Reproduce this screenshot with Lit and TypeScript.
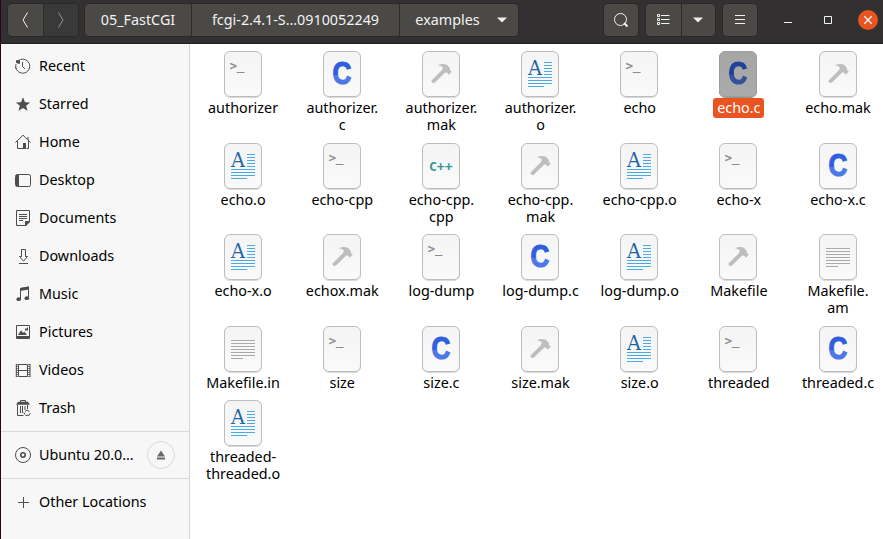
import { LitElement, html, svg, css, nothing } from "lit";
import { customElement, property } from "lit/decorators.js";
import { classMap } from "lit/directives/class-map.js";

type Kind = "exec" | "c" | "cpp" | "make" | "object" | "text";
interface Entry { kind: Kind; lines: string[]; selected?: boolean; }

const f = (kind: Kind, ...lines: string[]): Entry => ({ kind, lines });

const FILES: Entry[] = [
  f("exec", "authorizer"), f("c", "authorizer.", "c"), f("make", "authorizer.", "mak"), f("object", "authorizer.", "o"),
  f("exec", "echo"), { kind: "c", lines: ["echo.c"], selected: true }, f("make", "echo.mak"),
  f("object", "echo.o"), f("exec", "echo-cpp"), f("cpp", "echo-cpp.", "cpp"), f("make", "echo-cpp.", "mak"),
  f("object", "echo-cpp.o"), f("exec", "echo-x"), f("c", "echo-x.c"),
  f("object", "echo-x.o"), f("make", "echox.mak"), f("exec", "log-dump"), f("c", "log-dump.c"),
  f("object", "log-dump.o"), f("make", "Makefile"), f("text", "Makefile.", "am"),
  f("text", "Makefile.in"), f("exec", "size"), f("c", "size.c"), f("make", "size.mak"),
  f("object", "size.o"), f("exec", "threaded"), f("c", "threaded.c"),
  f("object", "threaded-", "threaded.o"),
];

const PLACES = ["Recent", "Starred", "Home", "Desktop", "Documents", "Downloads", "Music", "Pictures", "Videos", "Trash"];

const GLYPHS: Record<string, unknown> = {
  Recent: svg`<path class="s" d="M2.6 3.4A7 7 0 1 1 1 6.2M.5 9.5a7 7 0 0 0 .5 1.5M7.5 4v4.5l2.5 2.5"/><path d="M1 2.2h4v3.6H3.4L1 4.8z"/>`,
  Starred: svg`<path d="M8 1.3l2 4.9 5.1.2-4 3.3 1.4 5L8 11.9l-4.500 2.800 1.400-5L.9 6.400 6 6.200z"/>`,
  Home: svg`<path class="s" d="M.4 8.600 8 1.200l7.600 7.400M2.500 7v7.500h6M13.500 7v7.500h-2M13 3v3"/><path d="M8 9h3v6H8z"/>`,
  Desktop: svg`<rect class="s" x=".5" y="2.500" width="15" height="12" rx="1.800"/><path d="M1 3h3v11H1z"/>`,
  Documents: svg`<path class="s" d="M1.500.500h13V11l-4.500 4.500H1.500zM4 4.500h8M4 6.500h8M4 8.500h8M4 10.500h4"/><path d="M10 11h5v1l-4 4h-1z"/>`,
  Downloads: svg`<path class="s" d="M6.500 1.500h4v7h2L8.500 13.200 4.500 8.500h2zM4 15.500h9"/>`,
  Music: svg`<path class="s" d="M5.500 13V2.500L13.500 1v11"/><path d="M5 2l9-1.500v3L5 5z"/><ellipse cx="3.700" cy="13.200" rx="2.300" ry="1.900"/><ellipse cx="11.800" cy="12.200" rx="2.300" ry="1.900"/>`,
  Pictures: svg`<path class="s" d="M1.500 1.500h13v13h-13z"/><path d="M2 12h12v3H2zM3 11l3-4.800L8 9l1.200-1.500L12 11zM10 4.500h2V3.500h1v3h-3z"/>`,
  Videos: svg`<path class="s" d="M3.500 2.500h9v12h-9zM3.500 8.500h9"/><path class="dash" d="M1.900 2v13M14.100 2v13"/><path class="s" d="M1.300 2v13M15 2v13"/>`,
  Trash: svg`<path class="s" d="M5.500 2.500v-2h5v2M2.500 5v10.500h6M12.500 5v4M5.500 6v7M7.500 6v7M10 6v4"/><path d="M3 1.800h10l2 3H1z"/><path class="s" d="M9.500 14.500l-.5-2M10.500 15.400h3.500l1.400-2.200M10 11.500l2-1.500 2.500 1.500"/>`,
  Disc: svg`<circle class="s" cx="8" cy="8" r="7.500"/><circle class="ring" cx="8" cy="8" r="2.200"/>`,
  Plus: svg`<path class="s" d="M3 8.500h11M8.500 3v11"/>`,
};

const FACES: Record<Kind, unknown> = {
  exec: svg`<text class="term" x="5.800" y="18.800">&gt;_</text>`,
  c: svg`<text class="cee" x="9.400" y="33" textLength="18.800" lengthAdjust="spacingAndGlyphs">C</text>`,
  cpp: svg`<text class="cpp" x="7" y="27.500" textLength="23.500" lengthAdjust="spacingAndGlyphs">C++</text>`,
  make: svg`<path class="hammer" d="M9.500 29.500 19.800 19.200 21 16.800Q19.500 14.200 15.900 14.200 20.500 11.800 25 13.800L28 17.200 27.700 18.800 29.800 20.500 26.800 23.700 25.200 21.800 23.200 21.600 13 31.600Q11.500 32.600 10.300 31.500 9 30.500 9.500 29.500z"/>`,
  object: svg`<text class="aye" x="7" y="24" textLength="14" lengthAdjust="spacingAndGlyphs">A</text>
    <path class="blue" d="M23 11.500h8M23 14.500h8M23 17.500h8M23 20.500h8M23 23.500h8M7 26.500h24M7 29.500h24M7 32.500h24M7 35.500h16"/>`,
  text: svg`<path class="grey" d="M7 14.500h24M7 17.500h24M7 20.500h24M7 23.500h24M7 26.500h24M7 29.500h24M7 32.500h12"/>`,
};

@customElement("file-tile")
class FileTile extends LitElement {
  @property({ attribute: false }) entry!: Entry;

  static styles = css`
    :host { display: flex; flex-direction: column; align-items: center; }
    svg { display: block; width: 38px; height: 47px; flex: none; }
    .sheet { fill: url(#paper); stroke: #bdbdbd; }
    .low { fill: none; stroke: #d9d9d9; }
    .selected svg { filter: brightness(0.68); }
    .selected .sheet { stroke: #e6e6e6; }
    .tile { display: flex; flex-direction: column; align-items: center; }
    .label { text-align: center; margin-left: 1px; padding: 1px 4px 2px; border-radius: 3px; color: #000;
      font: 14.35px/17px "Noto Sans", sans-serif; white-space: pre; }
    .selected .label { background: #e95420; color: #fff; }
    .term { font: 12px "DejaVu Sans Mono", monospace; fill: #8c8c8c; stroke: #8c8c8c; stroke-width: .3; }
    .cee { font: bold 30.5px "Liberation Sans", sans-serif; fill: url(#ink); stroke: url(#ink); stroke-width: 1.2; }
    .cpp { font: bold 12.5px "DejaVu Sans Mono", monospace; fill: #35969b; }
    .aye { font: 19.5px "DejaVu Serif", serif; fill: #1f65a5; }
    .hammer { fill: #bebebe; }
    .blue { stroke: #49aae4; fill: none; }
    .grey { stroke: #a9a9a9; fill: none; }
  `;

  render() {
    const { kind, lines, selected } = this.entry;
    return html`<div class=${classMap({ tile: true, selected: !!selected })}>
      <svg viewBox="0 0 38 47">
        <defs>
          <linearGradient id="paper" x1="0" y1="0" x2="0" y2="1"><stop offset="0" stop-color="#f4f4f4"/><stop offset="1" stop-color="#fafafa"/></linearGradient>
          <linearGradient id="ink" x1="0" y1="0" x2="0" y2="1"><stop offset=".55" stop-color="#2f5fdf"/><stop offset=".55" stop-color="#4b78e6"/></linearGradient>
        </defs>
        <rect class="low" x=".5" y="1.500" width="37" height="45" rx="5.500"/>
        <rect class="sheet" x=".5" y=".5" width="37" height="45" rx="5.500"/>
        ${FACES[kind]}
      </svg>
      <div class="label">${lines.join("\n")}</div>
    </div>`;
  }
}

@customElement("app-root")
class AppRoot extends LitElement {
  static styles = css`
    :host { display: flex; width: 883px; height: 539px; overflow: hidden; background: #2c001e; box-sizing: border-box; padding-left: 1px;
      font: 14.35px/20px "Noto Sans", sans-serif; color: #000; }
    .window { flex: 1; min-width: 0; display: flex; flex-direction: column; background: #fff; }
    header { height: 44px; flex: none; box-sizing: border-box; background: #323030; border-bottom: 1px solid #1f1e1e; display: flex;
      align-items: flex-start; padding: 4px 5px 0 7px; color: #f2f2f2; }
    .group { display: flex; flex: none; height: 32px; border-radius: 4px; background: #4a4946; overflow: hidden; box-shadow: 0 0 0 1px #2a2929; }
    .group > div { display: flex; align-items: center; justify-content: center; box-sizing: border-box; }
    .group > div + div { border-left: 1px solid #2d2c2c; }
    .group .off { background: #3a3939; }
    .nav > div { width: 35px; }
    .nav > .on { padding-right: 2px; }
    .nav { margin-right: 7px; }
    .crumb-a { width: 106px; }
    .crumb-b { width: 208px; }
    .crumb-c { width: 119px; gap: 17px; padding-left: 4px; }
    .path { margin-right: 86px; }
    .tool { margin-right: 8px; }
    .tool > div { width: 34px; }
    .tool > .mode { width: 35px; padding-right: 2px; }
    .tool > .drop { padding-right: 2px; }
    .controls { display: flex; flex: none; margin-left: 14px; height: 32px; align-items: center; gap: 24px; }
    .close { margin-left: -1px; }
    header svg { display: block; fill: none; stroke: #f2f2f2; flex: none; }
    header .solid { fill: #f2f2f2; stroke: none; }
    header .dim { stroke: #929190; }
    header .disc { fill: #e95420; stroke: none; }
    main { flex: 1; display: flex; min-height: 0; }
    nav { width: 188px; flex: none; background: #f7f7f7; border-right: 1px solid #d6d6d6; padding-top: 3px; }
    .place { display: flex; height: 38px; align-items: center; padding-left: 14px; }
    .place svg { width: 16px; height: 16px; margin-right: 8px; fill: #4d4d4d; flex: none; }
    .place .s { fill: none; stroke: #4d4d4d; }
    .place .ring { fill: none; stroke: #4d4d4d; stroke-width: 1.6; }
    .place .dash { fill: none; stroke: #4d4d4d; stroke-width: 1.6; stroke-dasharray: 1 1; }
    .places { padding-bottom: 4px; }
    .volume, .other { border-top: 1px solid #d9d9d9; height: 46px; }
    .eject { width: 26px; height: 26px; border: 1px solid #d9d9d9; border-radius: 50%; display: flex; align-items: center; justify-content: center; margin-left: auto; margin-right: 14px; }
    .place .eject svg { width: 10px; height: 10px; margin: 0; fill: #696969; }
    .files { display: grid; grid-template-columns: repeat(7, 99.170px); grid-template-rows: 92px 91px 92px 74px 92px; align-content: start; padding: 7px 0 0 3px; }
  `;

  private place(name: string, glyph = name, cls = "", extra: unknown = nothing) {
    return html`<div class="place ${cls}"><svg viewBox="0 0 16 16">${GLYPHS[glyph]}</svg><span>${name}</span>${extra}</div>`;
  }

  render() {
    const caret = html`<svg width="10" height="6" viewBox="0 0 10 6"><path class="solid" d="M0 .5h10L5 5.500z"/></svg>`;
    return html`<div class="window">
      <header>
        <div class="group nav">
          <div class="on"><svg width="8" height="16" viewBox="0 0 8 16"><path d="M6.500.500 2 8l4.500 7.500"/></svg></div>
          <div class="off"><svg width="8" height="16" viewBox="0 0 8 16"><path class="dim" d="M1.500.500 6 8l-4.500 7.500"/></svg></div>
        </div>
        <div class="group path">
          <div class="crumb-a">05_FastCGI</div>
          <div class="crumb-b">fcgi-2.4.1-S…0910052249</div>
          <div class="crumb-c"><span>examples</span>${caret}</div>
        </div>
        <div class="group tool"><div><svg width="16" height="16" viewBox="0 0 16 16"><circle cx="7.500" cy="7.500" r="6"/><path stroke-width="2" d="M11 11l3.500 3.500"/></svg></div></div>
        <div class="group tool">
          <div class="mode"><svg width="14" height="12" viewBox="0 0 14 12"><path d="M1.500.500h2v2h-2zM1.500 4.500h2v2h-2zM1.500 8.500h2v2h-2zM5 1.500h8.500M5 5.500h8.500M5 9.500h8.500"/></svg></div>
          <div class="drop">${caret}</div>
        </div>
        <div class="group tool"><div><svg width="12" height="12" viewBox="0 0 12 12"><path d="M1 1.500h10M1 5.500h10M1 9.500h10"/></svg></div></div>
        <div class="controls">
          <svg width="16" height="16" viewBox="0 0 16 16"><path d="M5 10.500h8"/></svg>
          <svg width="16" height="16" viewBox="0 0 16 16"><path d="M5.500 4.500h7v7h-7z"/></svg>
          <svg class="close" width="20" height="20" viewBox="0 0 20 20"><circle class="disc" cx="10" cy="10" r="10"/><path stroke-width="1.400" d="M6.300 6.300l7.400 7.400M13.700 6.300l-7.400 7.400"/></svg>
        </div>
      </header>
      <main>
        <nav>
          <div class="places">${PLACES.map((p) => this.place(p))}</div>
          ${this.place("Ubuntu 20.0…", "Disc", "volume", html`<div class="eject"><svg viewBox="0 0 10 10"><path d="M5 .5 9 6.500H1zM1 7.500h8v2H1z"/></svg></div>`)}
          ${this.place("Other Locations", "Plus", "other")}
        </nav>
        <div class="files">${FILES.map((e) => html`<file-tile .entry=${e}></file-tile>`)}</div>
      </main>
    </div>`;
  }
}
